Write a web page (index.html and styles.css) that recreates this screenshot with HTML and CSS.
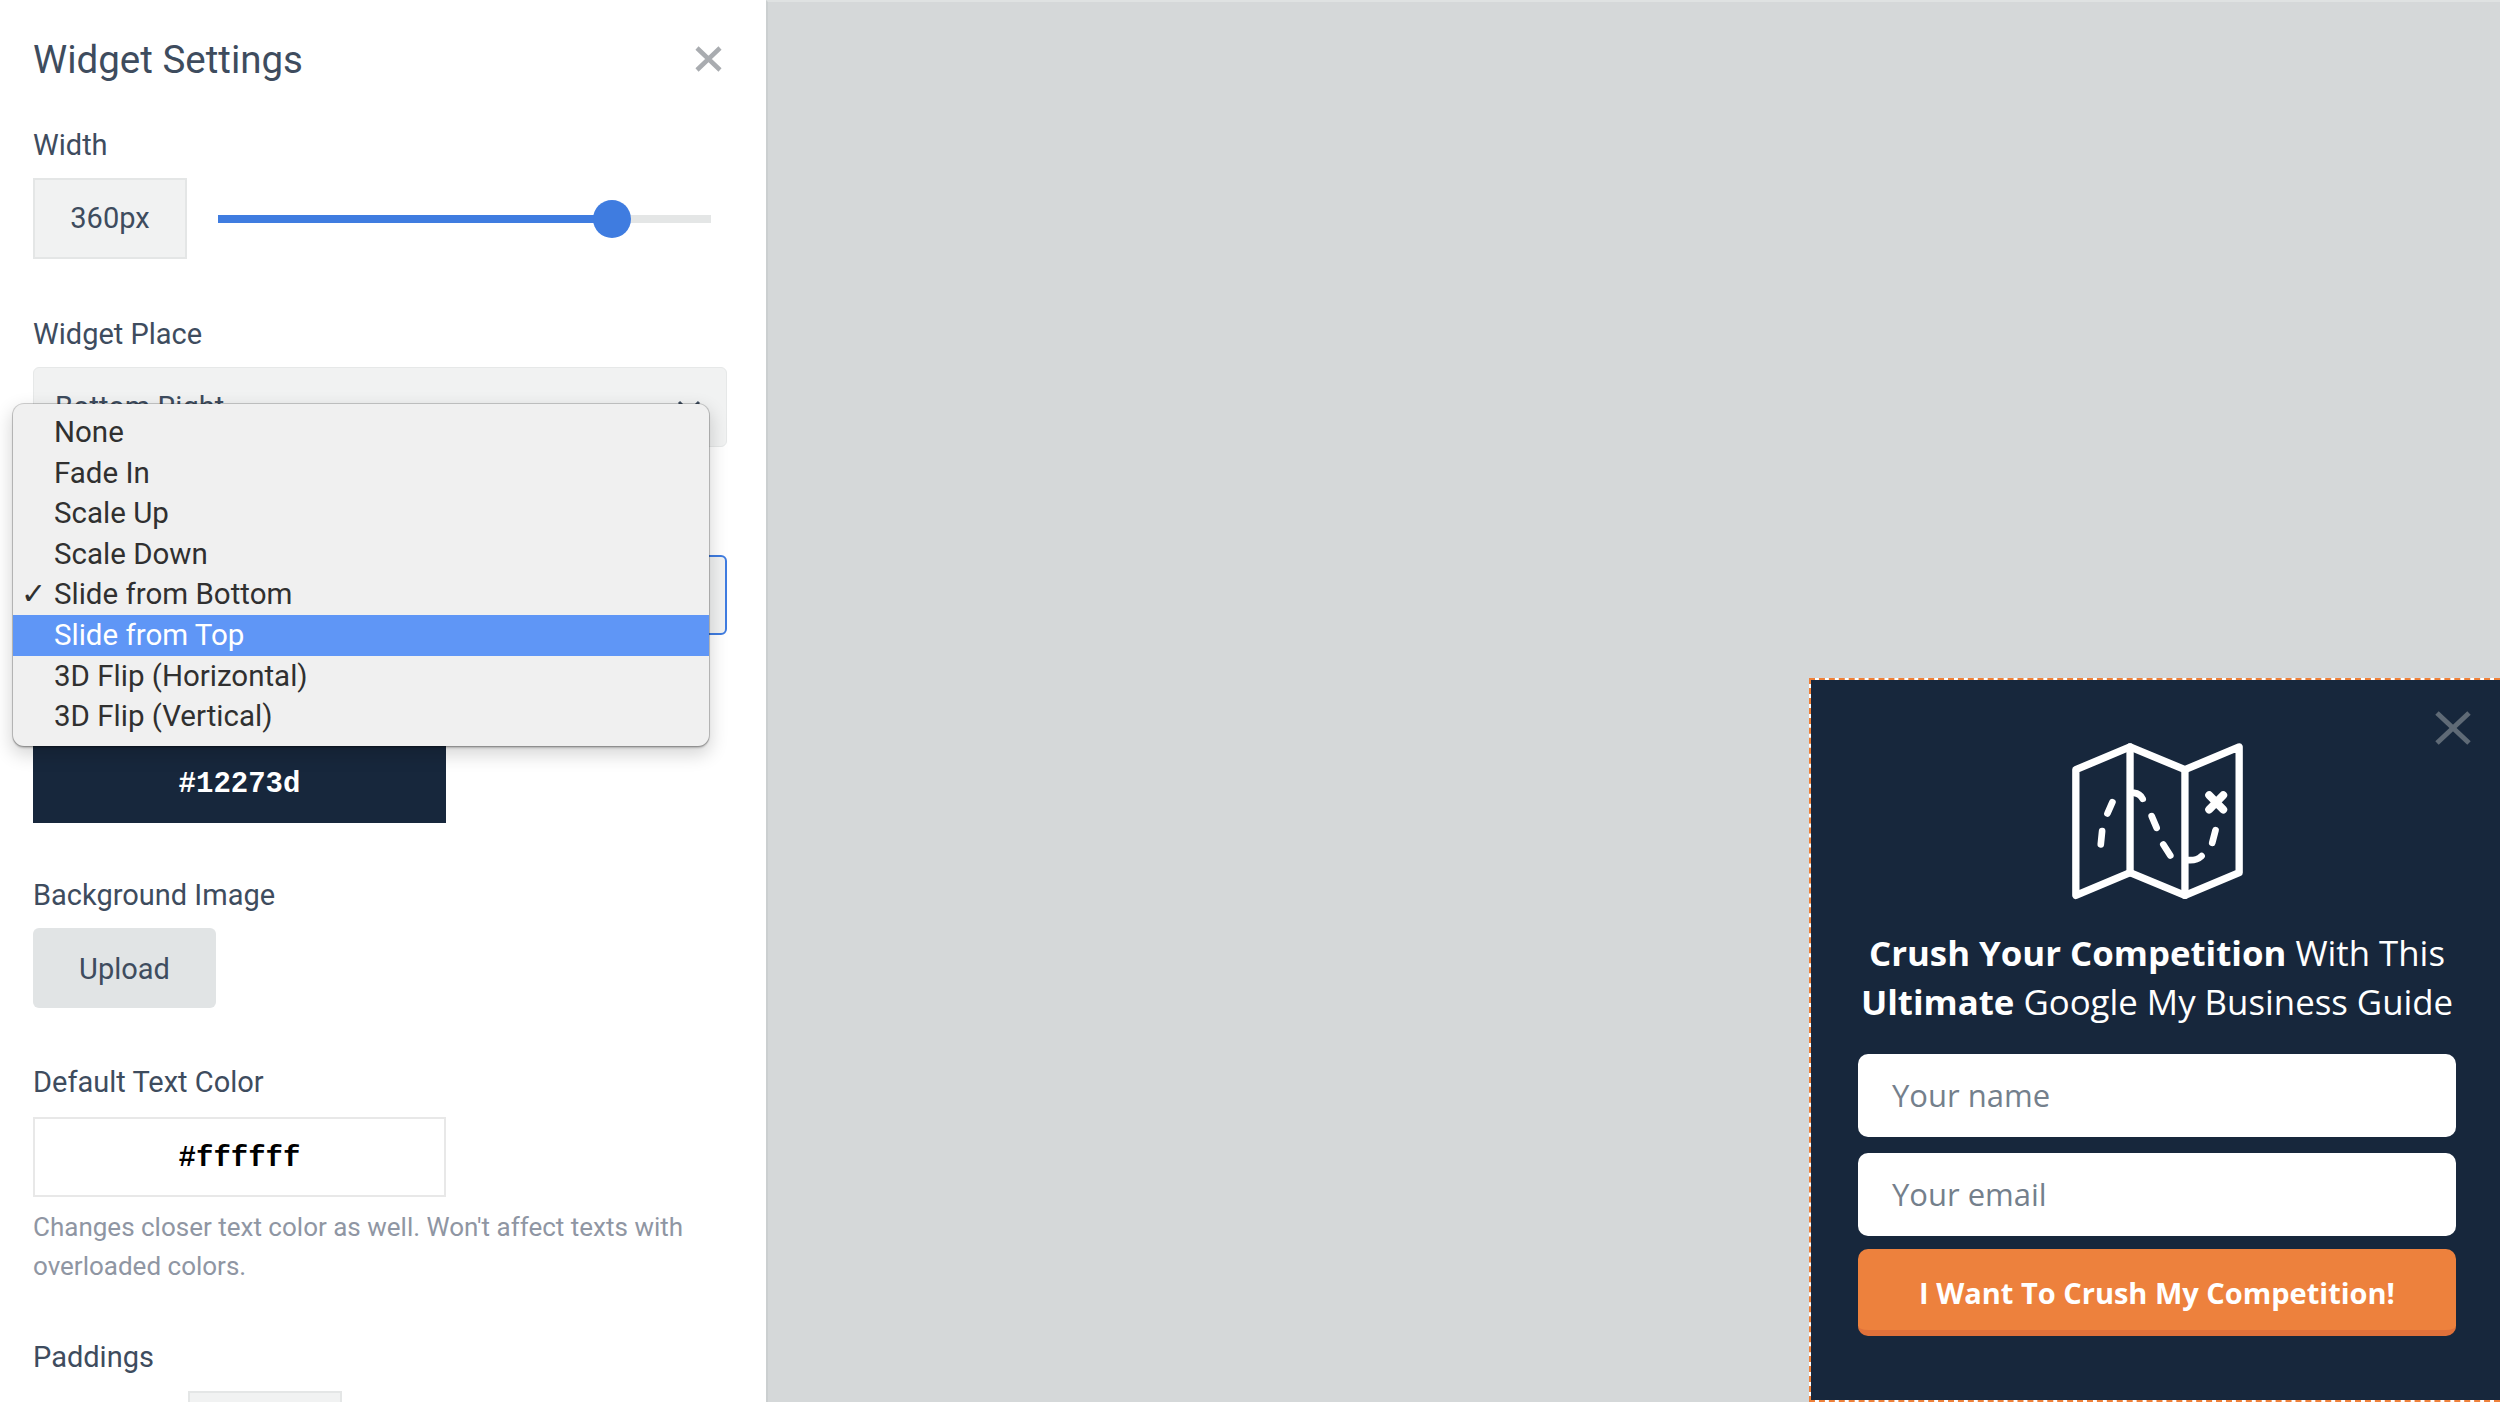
FILE: index.html
```html
<!DOCTYPE html>
<html lang="en">
<head>
    <meta charset="UTF-8">
    <title>Widget Settings</title>
    <link rel="stylesheet" href="styles.css">
</head>
<body>
    <aside class="sidebar">
        <div class="sidebar-head">
            <h1>Widget Settings</h1>
            <svg class="close-icon" viewBox="0 0 27 26"><path d="M2 2L25 24M25 2L2 24"/></svg>
        </div>

        <div class="field field-width">
            <label>Width</label>
            <div class="range-row">
                <div class="range-value">360px</div>
                <div class="range-track">
                    <div class="range-fill"></div>
                    <div class="range-thumb"></div>
                </div>
            </div>
        </div>

        <div class="field field-place">
            <label>Widget Place</label>
            <div class="select">
                <span>Bottom Right</span>
                <svg class="chevron" viewBox="0 0 24 14"><path d="M2 2L12 12L22 2"/></svg>
            </div>
        </div>

        <!-- these two sit under the open menu, labels can't be seen -->
        <div class="field field-anim">
            <label></label>
            <div class="select select-focus"></div>
        </div>

        <div class="field field-bg">
            <label></label>
            <div class="swatch swatch-dark">#12273d</div>
        </div>

        <div class="field field-image">
            <label>Background Image</label>
            <button class="upload">Upload</button>
        </div>

        <div class="field field-text">
            <label>Default Text Color</label>
            <div class="swatch swatch-light">#ffffff</div>
            <p class="help">Changes closer text color as well. Won't affect texts with overloaded colors.</p>
        </div>

        <div class="field field-pad">
            <label>Paddings</label>
            <div class="pad-row">
                <div class="pad-box"></div>
            </div>
        </div>

        <!-- native select menu, open over the form -->
        <ul class="menu">
            <li>None</li>
            <li>Fade In</li>
            <li>Scale Up</li>
            <li>Scale Down</li>
            <li class="checked">Slide from Bottom</li>
            <li class="active">Slide from Top</li>
            <li>3D Flip (Horizontal)</li>
            <li>3D Flip (Vertical)</li>
        </ul>
    </aside>

    <main class="preview">
        <div class="popup">
            <svg class="popup-close" viewBox="0 0 36 34"><path d="M2 2L34 32M34 2L2 32"/></svg>
            <svg class="map-icon" viewBox="60 40 522 472">
                <path class="map-line" d="M77 120L240 52L405 120L568 52V430L405 498L240 430L77 498Z"/>
                <path class="map-line" d="M240 52V430M405 120V498"/>
                <path class="map-dash" d="M187 218L172 252M156 305L152 345M252 190Q270 192 278 208M305 260L320 295M340 345L361 378M415 392Q440 394 455 380M497 302L487 340"/>
                <path class="map-cross" d="M478 197L520 240M520 197L478 240"/>
            </svg>
            <h2><b>Crush Your Competition</b> With This<br><b>Ultimate</b> Google My Business Guide</h2>
            <div class="popup-input">Your name</div>
            <div class="popup-input">Your email</div>
            <div class="popup-button">I Want To Crush My Competition!</div>
        </div>
    </main>
</body>
</html>
```

FILE: styles.css
```css
* {
    box-sizing: border-box;
}
body {
    margin: 0;
    height: 1402px;
    overflow: hidden;
    display: flex;
    font-family: 'Roboto', sans-serif;
    color: #3e4c5e;
    background-color: #d5d8d9;
}

.sidebar {
    position: relative;
    width: 766px;
    height: 1402px;
    padding: 0 33px;
    overflow: hidden;
    flex-shrink: 0;
    background-color: #ffffff;
}
.sidebar-head {
    display: flex;
    align-items: center;
    justify-content: space-between;
    height: 38px;
    margin-top: 41px;
    padding-right: 11px;
}
h1 {
    margin: 0;
    font-size: 38.5px;
    font-weight: 400;
    line-height: 38px;
}
.close-icon {
    width: 27px;
    height: 26px;
    margin-top: -2px;
    fill: none;
    stroke: #a9acb0;
    stroke-width: 4.5;
}

.field label {
    display: block;
    font-size: 29px;
    line-height: 34px;
    height: 34px;
}
.field-width {
    margin-top: 49px;
}
.range-row {
    display: flex;
    align-items: center;
    margin-top: 16px;
}
.range-value {
    width: 154px;
    height: 81px;
    line-height: 77px;
    text-align: center;
    font-size: 29px;
    background-color: #f1f2f2;
    border: 2px solid #e4e6e6;
}
.range-track {
    position: relative;
    width: 493px;
    height: 8px;
    margin-left: 31px;
    background-color: #e4e6e6;
}
.range-fill {
    width: 395px;
    height: 8px;
    background-color: #3f7ce0;
}
.range-thumb {
    position: absolute;
    left: 375px;
    top: -15px;
    width: 38px;
    height: 38px;
    border-radius: 50%;
    background-color: #3f7ce0;
}

.field-place {
    margin-top: 58px;
}
.select {
    display: flex;
    align-items: center;
    justify-content: space-between;
    width: 694px;
    height: 80px;
    margin-top: 16px;
    padding: 0 25px 0 21px;
    font-size: 29px;
    background-color: #f1f2f2;
    border: 1px solid #e6e8e8;
    border-radius: 6px;
}
.select-focus {
    border: 2px solid #3f7ce0;
}
.chevron {
    width: 24px;
    height: 14px;
    fill: none;
    stroke: #3e4c5e;
    stroke-width: 3;
}
.field-anim {
    margin-top: 58px;
}
.field-bg {
    margin-top: 58px;
}
.swatch {
    width: 413px;
    height: 80px;
    margin-top: 16px;
    text-align: center;
    font-family: 'Liberation Mono', monospace;
    font-size: 29px;
    font-weight: 700;
    line-height: 80px;
}
.swatch-dark {
    color: #ffffff;
    background-color: #17273c;
    border: 2px solid #17273c;
}
.swatch-light {
    margin-top: 18px;
    color: #000000;
    background-color: #ffffff;
    border: 2px solid #e8e8e8;
}
.field-image {
    margin-top: 55px;
}
.upload {
    display: block;
    width: 183px;
    height: 80px;
    margin-top: 16px;
    padding: 2px 0 0;
    font-family: inherit;
    font-size: 29px;
    color: #3e4c5e;
    background-color: #e1e4e5;
    border: 0;
    border-radius: 6px;
}
.field-text {
    margin-top: 57px;
}
.help {
    width: 680px;
    margin: 11px 0 0;
    font-size: 26px;
    line-height: 38.5px;
    color: #8f96a3;
}
.field-pad {
    margin-top: 55px;
}
.pad-row {
    display: flex;
    margin-top: 17px;
    padding-left: 155px;
}
.pad-box {
    width: 154px;
    height: 81px;
    background-color: #f1f2f2;
    border: 2px solid #e4e6e6;
}

.menu {
    position: absolute;
    left: 13px;
    top: 404px;
    width: 696px;
    height: 342px;
    margin: 0;
    padding: 8px 0;
    list-style: none;
    font-size: 29.5px;
    color: #303030;
    background-color: #f0f0f0;
    border-radius: 11px;
    box-shadow: 0 0 0 1px rgba(0, 0, 0, 0.18), 0 2px 2px rgba(0, 0, 0, 0.22), 0 7px 18px 2px rgba(0, 0, 0, 0.16);
}
.menu li {
    position: relative;
    height: 40.6px;
    line-height: 40px;
    padding-left: 41px;
}
.menu .checked::before {
    content: "\2713";
    position: absolute;
    left: 8px;
    font-family: 'DejaVu Sans', sans-serif;
    font-size: 30px;
    font-weight: 700;
}
.menu .active {
    color: #ffffff;
    background-color: #5f96f6;
}

.preview {
    flex: 1;
    display: flex;
    align-items: flex-end;
    justify-content: flex-end;
    border-top: 2px solid #dfe2e2;
    border-left: 2px solid #cbcfd0;
}
.popup {
    position: relative;
    display: flex;
    flex-direction: column;
    align-items: center;
    width: 691px;
    height: 724px;
    padding: 63px 45px 0 48px;
    font-family: 'Open Sans', sans-serif;
    color: #ffffff;
    background: linear-gradient(#17273c, #17273c) padding-box, #ffffff border-box;
    border: 2px dashed #ee8039;
    border-right: 0;
}
.popup-close {
    position: absolute;
    top: 31px;
    right: 29px;
    width: 36px;
    height: 34px;
    fill: none;
    stroke: #5f6a76;
    stroke-width: 5;
}
.map-icon {
    width: 174px;
    height: 157px;
}
.map-icon path {
    fill: none;
    stroke: #ffffff;
    stroke-linejoin: round;
    stroke-linecap: round;
}
.map-line {
    stroke-width: 22;
}
.map-dash {
    stroke-width: 20;
}
.map-cross {
    stroke-width: 24;
}
.popup h2 {
    margin: 28px 0 0;
    font-size: 34.8px;
    font-weight: 400;
    line-height: 49px;
    text-align: center;
    white-space: nowrap;
}
.popup-input {
    width: 598px;
    height: 83px;
    margin-top: 16px;
    padding-left: 34px;
    font-size: 31px;
    line-height: 83px;
    color: #74808c;
    background-color: #ffffff;
    border-radius: 10px;
}
.popup h2 + .popup-input {
    margin-top: 28px;
}
.popup-button {
    width: 598px;
    height: 87px;
    margin-top: 13px;
    font-size: 29px;
    font-weight: 700;
    line-height: 87px;
    text-align: center;
    background-color: #ed813d;
    border-bottom: 6px solid #e0713a;
    border-radius: 10px;
}
```
